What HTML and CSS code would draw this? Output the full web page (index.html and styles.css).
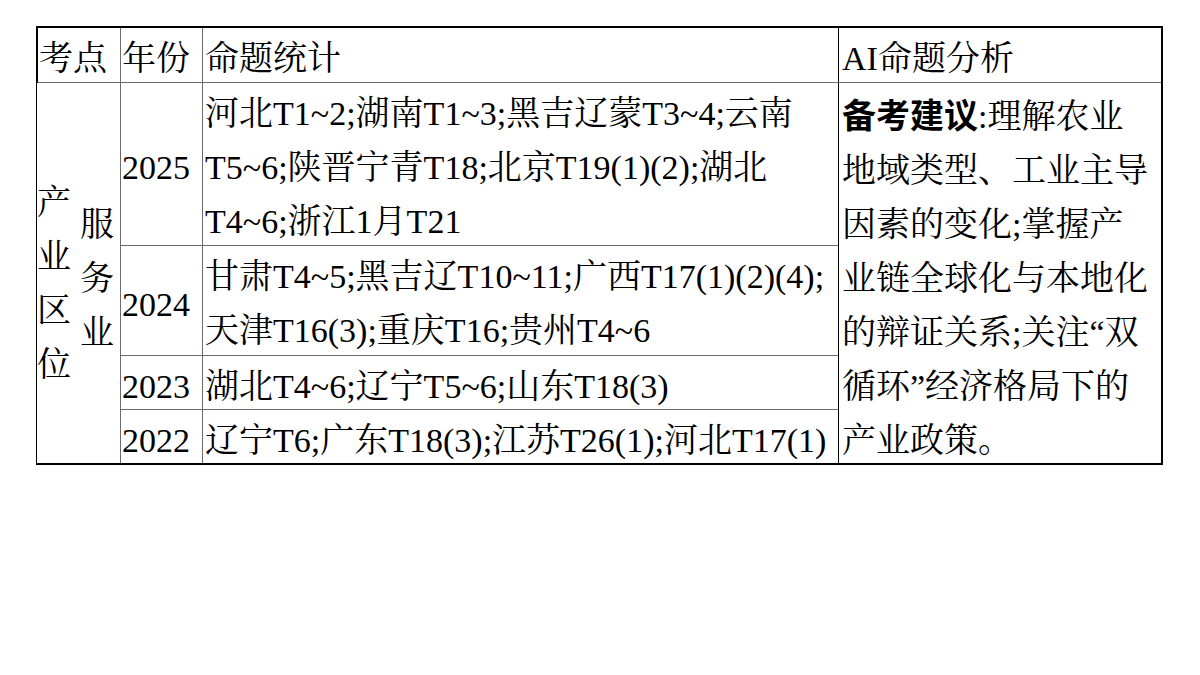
FILE: index.html
```html
<!DOCTYPE html>
<html lang="zh-CN">
<head>
<meta charset="utf-8">
<title>产业区位 命题统计</title>
<link rel="stylesheet" href="styles.css">
</head>
<body>
<div class="frame">
  <div class="grid">
    <div class="cell head span2">考点</div>
    <div class="cell head year">年份</div>
    <div class="cell head stat">命题统计</div>
    <div class="cell head ai">AI命题分析</div>

    <div class="cell topic">产<br>业<br>区<br>位</div>
    <div class="cell sub">服<br>务<br>业</div>

    <div class="cell year r2">2025</div>
    <div class="cell stat block r2">河北T1~2;湖南T1~3;黑吉辽蒙T3~4;云南<br>T5~6;陕晋宁青T18;北京T19(1)(2);湖北<br>T4~6;浙江1月T21</div>

    <div class="cell ai body">
      <p><b>备考建议</b>:理解农业<br>地域类型、工业主导<br>因素的变化;掌握产<br>业链全球化与本地化<br>的辩证关系;关注“双<br>循环”经济格局下的<br>产业政策。</p>
    </div>

    <div class="cell year r3">2024</div>
    <div class="cell stat block r3">甘肃T4~5;黑吉辽T10~11;广西T17(1)(2)(4);<br>天津T16(3);重庆T16;贵州T4~6</div>

    <div class="cell year r4">2023</div>
    <div class="cell stat r4">湖北T4~6;辽宁T5~6;山东T18(3)</div>

    <div class="cell year r5">2022</div>
    <div class="cell stat r5">辽宁T6;广东T18(3);江苏T26(1);河北T17(1)</div>
  </div>
</div>
</body>
</html>
```

FILE: styles.css
```css
html, body {
  margin: 0;
  padding: 0;
  background: #fff;
}

body {
  font-family: "Liberation Serif", "Noto Serif CJK SC", "Noto Sans CJK SC", serif;
  font-size: 34px;
  color: #000;
}

.frame {
  margin: 26px 0 0 36px;
  width: 1123px;
  border: 2px solid #000;
}

.grid {
  display: grid;
  grid-template-columns: 42px 39px 81px 635px 322px;
  grid-template-rows: 54px 162px 109px 53px 53px;
  gap: 1px;
  background: #6b6b6b;
}

.cell {
  background: #fff;
  overflow: hidden;
  white-space: nowrap;
  line-height: 54px;
  display: flex;
  align-items: center;
  padding-top: 8px;
  box-sizing: border-box;
}

.cell.block {
  display: block;
  padding-top: 4px;
}

.head {
  grid-row: 1;
}

.span2 {
  grid-column: 1 / 3;
  padding-left: 1px;
}

.head.year { grid-column: 3; }
.head.stat { grid-column: 4; }
.head.ai { grid-column: 5; }

.topic {
  grid-column: 1;
  grid-row: 2 / 6;
  padding-top: 22px;
  margin-left: -1px;
}

.sub {
  grid-column: 2;
  grid-row: 2 / 6;
  padding-top: 12px;
  margin-left: -1px;
}

.year {
  grid-column: 3;
  padding-left: 1px;
}

.stat {
  grid-column: 4;
  padding-left: 2px;
}

.ai {
  grid-column: 5;
  box-shadow: inset 1px 0 0 #000;
  margin-left: -1px;
  padding-left: 4px;
}

.ai.body {
  grid-row: 2 / 6;
  display: block;
  padding-top: 4px;
}

.ai.body p {
  margin: 0;
  line-height: 54px;
}

.ai.body b {
  font-family: "Noto Sans CJK SC", sans-serif;
  font-weight: 700;
}

.r2 { grid-row: 2; }
.r3 { grid-row: 3; }
.r4 { grid-row: 4; }
.r5 { grid-row: 5; }
```
